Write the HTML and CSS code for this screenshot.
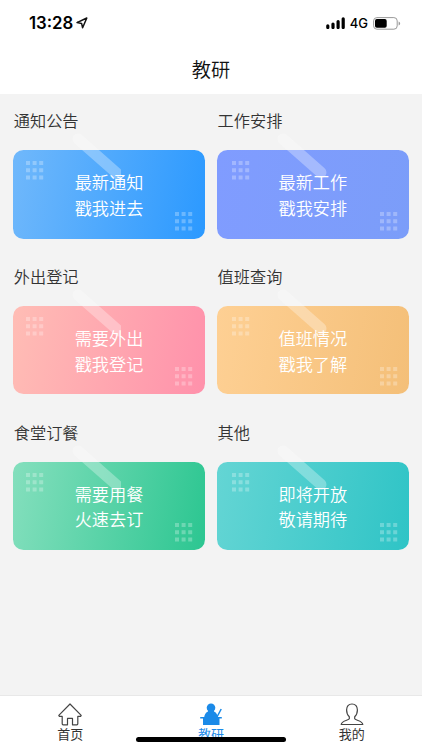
FILE: index.html
```html
<!DOCTYPE html>
<html lang="zh-CN">
<head>
    <meta charset="UTF-8">
    <meta name="viewport" content="width=device-width, initial-scale=1.0">
    <title>教研</title>
    <link rel="stylesheet" href="styles.css">
</head>
<body>
    <svg class="defs" width="0" height="0">
        <defs>
            <g id="dots">
                <path d="M0 2h17.5M0 9.2h17.5M0 16.4h17.5" fill="none" stroke="#fff" stroke-width="4" stroke-dasharray="4 2.6"/>
            </g>
        </defs>
    </svg>

    <div class="status-bar">
        <div class="status-left">
            <span class="time">13:28</span>
            <svg width="12" height="12" viewBox="0 0 12 12"><path d="M1 5.6 10.8 1 6.6 10.8 5.6 6.4Z" fill="none" stroke="#111" stroke-width="1.5" stroke-linejoin="round"/></svg>
        </div>
        <div class="status-right">
            <svg width="19" height="12" viewBox="0 0 19 12"><path d="M1.8 8.8v1.7M7 7v3.5M12.1 4.5v6M17.2 1.8v8.7" stroke="#000" stroke-width="3.2" stroke-linecap="round"/></svg>
            <span class="network">4G</span>
            <svg width="28" height="13" viewBox="0 0 28 13"><rect x=".6" y=".6" width="23.6" height="11.6" rx="3.3" fill="#fff" stroke="#999"/><rect x="2" y="2.1" width="11.7" height="8.6" rx="1.8" fill="#000"/><path d="M25.6 4.4q1.5.4 1.5 2t-1.5 2z" fill="#999"/></svg>
        </div>
    </div>

    <header class="navbar">教研</header>

    <main class="grid">
        <section class="item">
            <h3>通知公告</h3>
            <a class="card blue">
                <svg class="streak" width="54" height="54"><path d="M11 11 52 47" /></svg>
                <svg class="dots top" width="18" height="19"><use href="#dots"/></svg>
                <span>最新通知</span><span>戳我进去</span>
                <svg class="dots bottom" width="18" height="19"><use href="#dots"/></svg>
            </a>
        </section>
        <section class="item right">
            <h3>工作安排</h3>
            <a class="card purple">
                <svg class="streak" width="60" height="54"><path d="M11 11 49 44.500" /></svg>
                <svg class="dots top" width="18" height="19"><use href="#dots"/></svg>
                <span>最新工作</span><span>戳我安排</span>
                <svg class="dots bottom" width="18" height="19"><use href="#dots"/></svg>
            </a>
        </section>
        <section class="item">
            <h3>外出登记</h3>
            <a class="card pink">
                <svg class="streak" width="54" height="54"><path d="M11 11 52 47" /></svg>
                <svg class="dots top" width="18" height="19"><use href="#dots"/></svg>
                <span>需要外出</span><span>戳我登记</span>
                <svg class="dots bottom" width="18" height="19"><use href="#dots"/></svg>
            </a>
        </section>
        <section class="item right">
            <h3>值班查询</h3>
            <a class="card orange">
                <svg class="streak" width="60" height="54"><path d="M11 11 49 44.500" /></svg>
                <svg class="dots top" width="18" height="19"><use href="#dots"/></svg>
                <span>值班情况</span><span>戳我了解</span>
                <svg class="dots bottom" width="18" height="19"><use href="#dots"/></svg>
            </a>
        </section>
        <section class="item">
            <h3>食堂订餐</h3>
            <a class="card green">
                <svg class="streak" width="54" height="54"><path d="M11 11 52 47" /></svg>
                <svg class="dots top" width="18" height="19"><use href="#dots"/></svg>
                <span>需要用餐</span><span>火速去订</span>
                <svg class="dots bottom" width="18" height="19"><use href="#dots"/></svg>
            </a>
        </section>
        <section class="item right">
            <h3>其他</h3>
            <a class="card teal">
                <svg class="streak" width="60" height="54"><path d="M11 11 49 44.500" /></svg>
                <svg class="dots top" width="18" height="19"><use href="#dots"/></svg>
                <span>即将开放</span><span>敬请期待</span>
                <svg class="dots bottom" width="18" height="19"><use href="#dots"/></svg>
            </a>
        </section>
    </main>

    <nav class="tabbar">
        <a class="tab">
            <svg width="24" height="23" viewBox="0 0 24 23"><path d="M12 1 .8 12.4l.6 1h2.8v7.4q0 1 1 1h4.3v-6.4h5v6.4h4.3q1 0 1-1v-7.4h2.8l.6-1Z" fill="none" stroke="#444" stroke-width="1.2" stroke-linejoin="round"/></svg>
            <span>首页</span>
        </a>
        <a class="tab active">
            <svg width="24" height="23" viewBox="0 0 24 23"><circle cx="12" cy="4.8" r="4.3"/><path d="M9 7h6v1.600q3 1.200 3.800 5.400H22.800v1.500h-2.300V22H4v-6.500H1.200V14H5.200q.8-4.200 3.800-5.400z"/><path d="m18 14 4.200-8" fill="none" stroke="#1b8ae8" stroke-width="1.500"/></svg>
            <span>教研</span>
        </a>
        <a class="tab">
            <svg width="24" height="23" viewBox="0 0 24 23"><path d="M12 1c-3.500 0-5.400 2.500-5.400 6 0 3 1.100 5.300 2.700 6.800v2C8.700 17.300 1.500 17.600 1.200 21.500h21.600c-.3-3.900-7.500-4.200-8.100-5.700v-2c1.600-1.500 2.700-3.800 2.700-6.800 0-3.500-1.900-6-5.400-6Z" fill="none" stroke="#444" stroke-width="1.200" stroke-linejoin="round"/></svg>
            <span>我的</span>
        </a>
        <div class="home-indicator"></div>
    </nav>
</body>
</html>
```
FILE: styles.css
```css
* {
    box-sizing: border-box;
}
body {
    margin: 0;
    height: 750px;
    display: flex;
    flex-direction: column;
    background-color: #f3f3f3;
    color: #333;
    font-family: "Noto Sans CJK SC", sans-serif;
    overflow: hidden;
}
svg {
    display: block;
    flex: none;
}
.defs {
    position: absolute;
}
.status-bar {
    height: 46px;
    padding: 0 21px 0 29px;
    display: flex;
    justify-content: space-between;
    align-items: center;
    background-color: #fff;
    color: #000;
    font-family: Inter, sans-serif;
}
.status-left, .status-right {
    display: flex;
    align-items: center;
}
.time {
    font-size: 16.8px;
    font-weight: 600;
    margin-right: 3px;
}
.network {
    font-size: 13px;
    font-weight: 500;
    margin: 0 5px;
}
.navbar {
    height: 48px;
    line-height: 46px;
    background-color: #fff;
    color: #111;
    font-size: 19.2px;
    font-weight: 350;
    text-align: center;
}
.grid {
    flex: 1;
    display: grid;
    grid-template-columns: 191.5px 191.5px;
    grid-auto-rows: 155.8px;
    align-content: start;
    column-gap: 12.3px;
    padding: 0 13.3px;
}
h3 {
    height: 56px;
    margin: 0;
    padding: 14px 0 0 0.5px;
    font-size: 16.2px;
    font-weight: 350;
    line-height: 24px;
}
.card {
    position: relative;
    height: 88.5px;
    display: flex;
    flex-direction: column;
    align-items: center;
    justify-content: center;
    border-radius: 10.5px;
    color: #fff;
    font-size: 17.2px;
    font-weight: 350;
    line-height: 25.7px;
    padding-top: 1px;
}
.card span {
    position: relative;
}
.blue { background: linear-gradient(100deg, #70b8fb, #2b99ff); }
.purple { background: linear-gradient(100deg, #809cff, #7b9df9); }
.pink { background: linear-gradient(100deg, #ffbdb5, #ff91ab); }
.orange { background: linear-gradient(100deg, #fed094, #f4bf78); }
.green { background: linear-gradient(100deg, #84dfbd, #2cc691); }
.teal { background: linear-gradient(100deg, #64d5d4, #2fc4c6); }
/* decorations lying over the card */
.streak {
    position: absolute;
    left: 54px;
    top: -22px;
    fill: none;
    stroke: rgba(255, 255, 255, 0.3);
    stroke-width: 11px;
    stroke-linecap: round;
}
.right .streak {
    left: 55px;
}
.dots {
    position: absolute;
    opacity: 0.27;
}
.top {
    left: 13px;
    top: 11px;
}
.bottom {
    right: 12px;
    bottom: 8px;
}
.right .top {
    left: 14.5px;
}
.right .bottom {
    right: 10.5px;
}
.tabbar {
    position: relative;
    height: 55px;
    display: flex;
    background-color: #fff;
    border-top: 1px solid #e8e8e8;
}
.tab {
    flex: 1;
    display: flex;
    flex-direction: column;
    align-items: center;
    padding-top: 6.5px;
    font-size: 13px;
    line-height: 16px;
}
.active {
    color: #1b8ae8;
    fill: #1b8ae8;
}
.home-indicator {
    position: absolute;
    left: 136px;
    bottom: 8.5px;
    width: 150px;
    height: 5px;
    border-radius: 3px;
    background-color: #000;
}
```
